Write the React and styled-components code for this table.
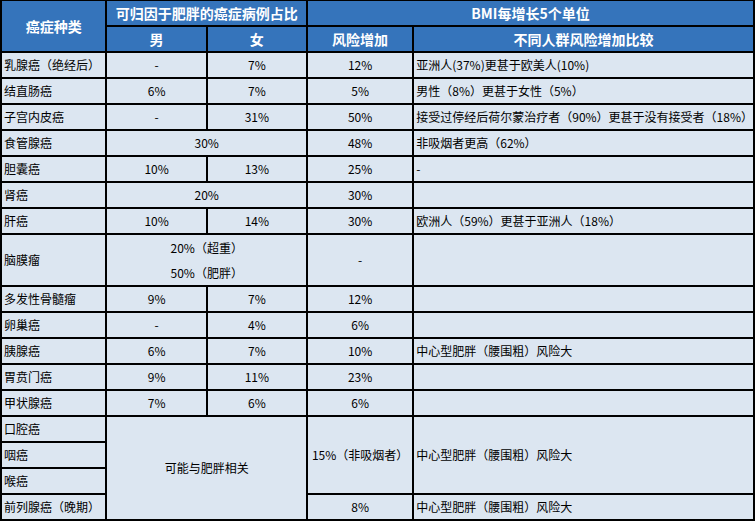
import React from 'react';
import styled, { createGlobalStyle } from 'styled-components';

const GlobalStyle = createGlobalStyle`
	html, body {
		margin: 0;
		padding: 0;
		background: #ffffff;
	}
	body {
		font-family: "Noto Sans CJK SC", "Liberation Sans", sans-serif;
	}
`;

const TableStyled = styled.table`
	border-collapse: collapse;
	table-layout: fixed;
	margin: -1px 0 0 0;
	font-size: 12px;
	color: #000;
	background-color: #dce6f1;
`;

const HeadCell = styled.th`
	height: 24px;
	padding: 0;
	border: 2px solid #000;
	background-color: #3574bb;
	color: #fff;
	font-size: 14px;
	font-weight: 700;
	line-height: 16px;
	text-align: center;
	vertical-align: middle;
	white-space: nowrap;
`;

const Row = styled.tr`
	height: ${(p) => (p.$tall ? 52 : 26)}px;
`;

const Cell = styled.td`
	padding: 0 0 0 ${(p) => (p.$left ? 2 : 0)}px;
	border: 2px solid #000;
	line-height: 16px;
	text-align: ${(p) => (p.$left ? 'left' : 'center')};
	vertical-align: middle;
	white-space: nowrap;
	overflow: hidden;
`;

const Line = styled.div`
	line-height: 25px;
`;

const rows = [
	{ name: '乳腺癌（绝经后）', m: '-', f: '7%', risk: '12%', note: '亚洲人(37%)更甚于欧美人(10%)' },
	{ name: '结直肠癌', m: '6%', f: '7%', risk: '5%', note: '男性（8%）更甚于女性（5%）' },
	{ name: '子宫内皮癌', m: '-', f: '31%', risk: '50%', note: '接受过停经后荷尔蒙治疗者（90%）更甚于没有接受者（18%）' },
	{ name: '食管腺癌', both: '30%', risk: '48%', note: '非吸烟者更高（62%）' },
	{ name: '胆囊癌', m: '10%', f: '13%', risk: '25%', note: '-' },
	{ name: '肾癌', both: '20%', risk: '30%', note: '' },
	{ name: '肝癌', m: '10%', f: '14%', risk: '30%', note: '欧洲人（59%）更甚于亚洲人（18%）' },
	{ name: '脑膜瘤', tall: true, both: ['20%（超重）', '50%（肥胖）'], risk: '-', note: '' },
	{ name: '多发性骨髓瘤', m: '9%', f: '7%', risk: '12%', note: '' },
	{ name: '卵巢癌', m: '-', f: '4%', risk: '6%', note: '' },
	{ name: '胰腺癌', m: '6%', f: '7%', risk: '10%', note: '中心型肥胖（腰围粗）风险大' },
	{ name: '胃贲门癌', m: '9%', f: '11%', risk: '23%', note: '' },
	{ name: '甲状腺癌', m: '7%', f: '6%', risk: '6%', note: '' },
];

const App = () => {
	return (
		<>
			<GlobalStyle />
			<TableStyled>
				<colgroup>
					<col style={{ width: 106 }} />
					<col style={{ width: 101 }} />
					<col style={{ width: 101 }} />
					<col style={{ width: 107 }} />
					<col style={{ width: 336 }} />
				</colgroup>
				<thead>
					<Row>
						<HeadCell rowSpan={2}>癌症种类</HeadCell>
						<HeadCell colSpan={2}>可归因于肥胖的癌症病例占比</HeadCell>
						<HeadCell colSpan={2}>BMI每增长5个单位</HeadCell>
					</Row>
					<Row>
						<HeadCell>男</HeadCell>
						<HeadCell>女</HeadCell>
						<HeadCell>风险增加</HeadCell>
						<HeadCell>不同人群风险增加比较</HeadCell>
					</Row>
				</thead>
				<tbody>
					{rows.map((r) => (
						<Row key={r.name} $tall={r.tall}>
							<Cell $left>{r.name}</Cell>
							{r.both ? (
								<Cell colSpan={2}>
									{Array.isArray(r.both)
										? r.both.map((t) => <Line key={t}>{t}</Line>)
										: r.both}
								</Cell>
							) : (
								<>
									<Cell>{r.m}</Cell>
									<Cell>{r.f}</Cell>
								</>
							)}
							<Cell>{r.risk}</Cell>
							<Cell $left>{r.note}</Cell>
						</Row>
					))}
					<Row>
						<Cell $left>口腔癌</Cell>
						<Cell colSpan={2} rowSpan={4}>可能与肥胖相关</Cell>
						<Cell rowSpan={3}>15%（非吸烟者）</Cell>
						<Cell $left rowSpan={3}>中心型肥胖（腰围粗）风险大</Cell>
					</Row>
					<Row>
						<Cell $left>咽癌</Cell>
					</Row>
					<Row>
						<Cell $left>喉癌</Cell>
					</Row>
					<Row>
						<Cell $left>前列腺癌（晚期）</Cell>
						<Cell>8%</Cell>
						<Cell $left>中心型肥胖（腰围粗）风险大</Cell>
					</Row>
				</tbody>
			</TableStyled>
		</>
	);
};

export default App;
